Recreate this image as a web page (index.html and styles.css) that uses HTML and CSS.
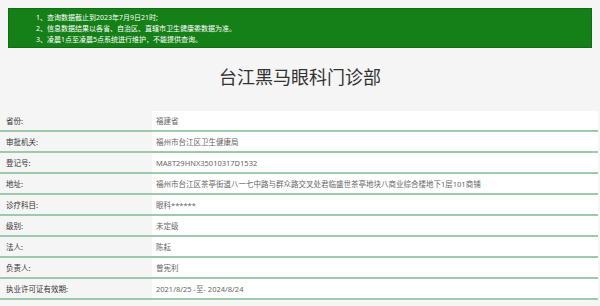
FILE: index.html
```html
<!DOCTYPE html>
<html lang="zh-CN">
<head>
  <meta charset="UTF-8">
  <meta name="viewport" content="width=device-width, initial-scale=1.0">
  <title>台江黑马眼科门诊部</title>
  <link rel="stylesheet" href="styles.css">
</head>
<body>

  <div class="notice">
    <p>1、查询数据截止到2023年7月9日21时;</p>
    <p>2、信息数据结果以各省、自治区、直辖市卫生健康委数据为准。</p>
    <p>3、凌晨1点至凌晨5点系统进行维护，不能提供查询。</p>
  </div>

  <h1 class="title">台江黑马眼科门诊部</h1>

  <table class="info">
    <tbody>
      <tr><th>省份:</th><td>福建省</td></tr>
      <tr><th>审批机关:</th><td>福州市台江区卫生健康局</td></tr>
      <tr><th>登记号:</th><td>MA8T29HNX35010317D1532</td></tr>
      <tr><th>地址:</th><td>福州市台江区茶亭街道八一七中路与群众路交叉处君临盛世茶亭地块八商业综合楼地下1层101商铺</td></tr>
      <tr><th>诊疗科目:</th><td>眼科******</td></tr>
      <tr><th>级别:</th><td>未定级</td></tr>
      <tr><th>法人:</th><td>陈耘</td></tr>
      <tr><th>负责人:</th><td>曾宪利</td></tr>
      <tr><th>执业许可证有效期:</th><td>2021/8/25 -至- 2024/8/24</td></tr>
    </tbody>
  </table>

</body>
</html>
```

FILE: styles.css
```css
body {
  font-family: "Noto Sans", "Noto Sans CJK SC", sans-serif;
  margin: 0;
  padding-top: 8px;
  background-color: #f5f5f5;
  color: #333;
}

.notice {
  margin: 0 8px;
  padding: 3px 27px 3px;
  height: 32px;
  background-color: #168018;
  border: 1px solid #0f6e12;
  color: #fff;
  font-size: 7px;
}

.notice p {
  margin: 0;
  line-height: 11px;
}

.title {
  margin: 0;
  height: 63px;
  line-height: 58px;
  text-align: center;
  font-size: 18px;
  font-weight: normal;
  color: #333;
}

.info {
  width: 598px;
  border-collapse: collapse;
  font-size: 7.5px;
}

.info th,
.info td {
  height: 19px;
  padding: 0 6px;
  text-align: left;
  border-bottom: 2px solid #9dc9ae;
}

.info th {
  width: 140px;
  font-weight: normal;
  color: #333;
}

.info td {
  padding-left: 4px;
  background-color: #fff;
  color: #666;
}
```
